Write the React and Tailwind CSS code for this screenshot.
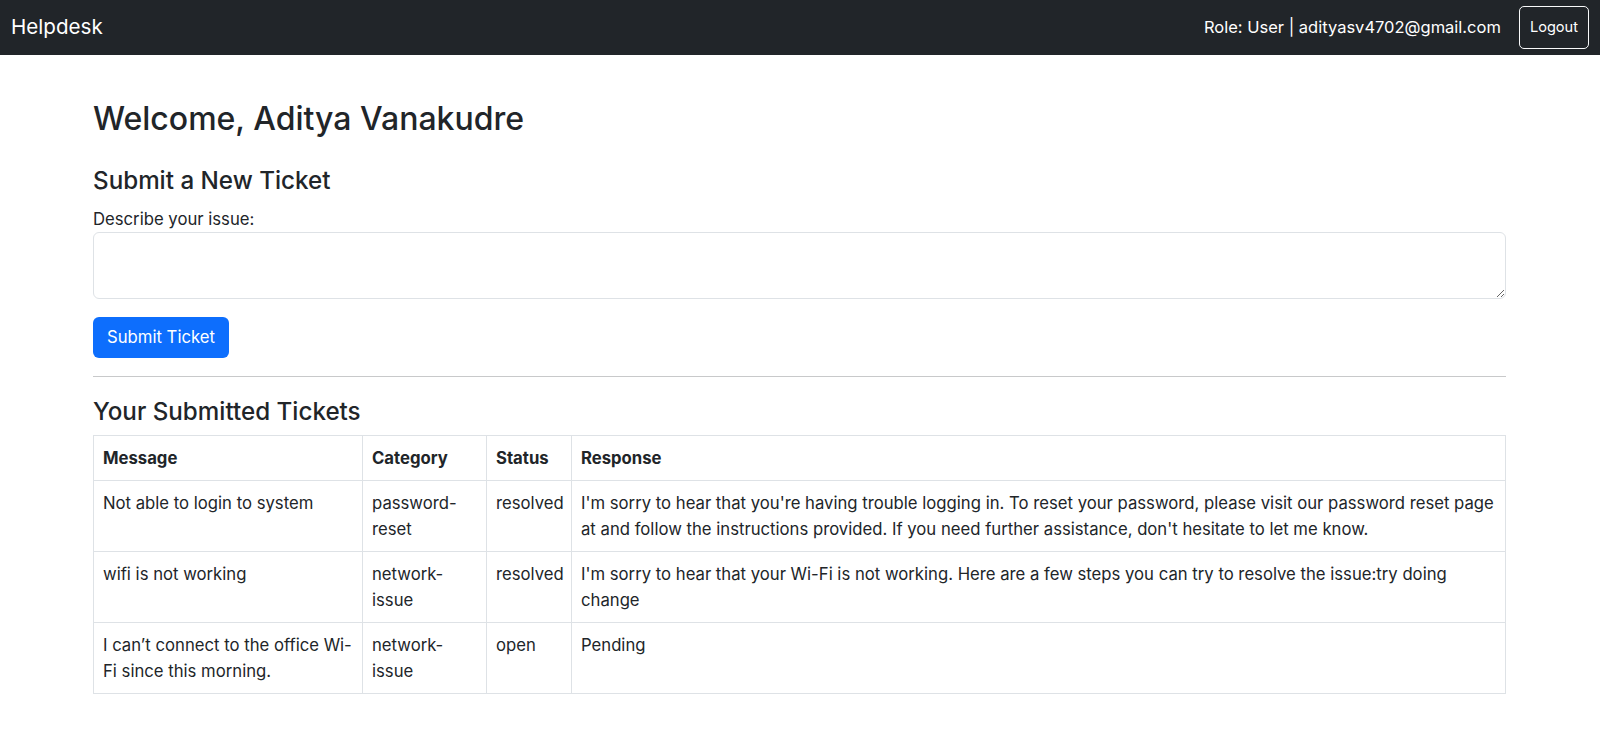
const tickets = [
  {
    message: "Not able to login to system",
    category: "password-reset",
    status: "resolved",
    response: (
      <>
        I'm sorry to hear that you're having trouble logging in. To reset your password, please visit our password reset page
        <br />
        at and follow the instructions provided. If you need further assistance, don't hesitate to let me know.
      </>
    ),
  },
  {
    message: "wifi is not working",
    category: "network-issue",
    status: "resolved",
    response: (
      <>
        I'm sorry to hear that your Wi-Fi is not working. Here are a few steps you can try to resolve the issue:try doing
        <br />
        change
      </>
    ),
  },
  {
    message: (
      <>
        I can’t connect to the office Wi-
        <br />
        Fi since this morning.
      </>
    ),
    category: "network-issue",
    status: "open",
    response: "Pending",
  },
];

export default function App() {
  return (
    <div className="min-h-screen bg-white text-[#212529] font-['Inter','Liberation_Sans',sans-serif]">
      {/* top bar */}
      <nav className="h-[55px] bg-[#212529] flex items-center justify-between pl-[11px] pr-[11px]">
        <span className="text-white text-[20.6px] leading-none">Helpdesk</span>
        <div className="flex items-center gap-[18px]">
          <span className="text-white text-[16.5px]">Role: User | adityasv4702@gmail.com</span>
          <button className="h-[43px] px-[10px] border border-[#f8f9fa] rounded-[5px] text-white text-[14.6px]">
            Logout
          </button>
        </div>
      </nav>

      <main className="w-[1413px] ml-[93px]">
        <h2 className="mt-[43px] text-[32px] font-medium leading-[42px]">Welcome, Aditya Vanakudre</h2>

        <h4 className="mt-[25px] text-[24.2px] font-medium leading-[32px]">Submit a New Ticket</h4>
        <label className="block mt-[9px] text-[16.7px] leading-[26px]">Describe your issue:</label>
        <textarea className="block w-full h-[67px] border border-[#dee2e6] rounded-[6px] px-3 py-2 outline-none" />
        <button className="mt-[18px] h-[41px] px-[14px] bg-[#0d6efd] text-white text-[16.7px] rounded-[6px]">
          Submit Ticket
        </button>

        <hr className="mt-[18px] border-0 border-t border-[#c8c9ca]" />

        <h4 className="mt-[19px] text-[24.2px] font-medium leading-[32px]">Your Submitted Tickets</h4>

        <table className="mt-[7px] w-full table-fixed border-collapse text-[16.7px] leading-[26px]">
          <colgroup>
            <col className="w-[269px]" />
            <col className="w-[124px]" />
            <col className="w-[85px]" />
            <col />
          </colgroup>
          <thead>
            <tr>
              <th className="border border-[#dee2e6] px-[9px] py-[9px] text-left font-bold">Message</th>
              <th className="border border-[#dee2e6] px-[9px] py-[9px] text-left font-bold">Category</th>
              <th className="border border-[#dee2e6] px-[9px] py-[9px] text-left font-bold">Status</th>
              <th className="border border-[#dee2e6] px-[9px] py-[9px] text-left font-bold">Response</th>
            </tr>
          </thead>
          <tbody>
            {tickets.map((t, i) => (
              <tr key={i} className="align-top">
                <td className="border border-[#dee2e6] px-[9px] py-[9px]">{t.message}</td>
                <td className="border border-[#dee2e6] px-[9px] py-[9px]">{t.category}</td>
                <td className="border border-[#dee2e6] px-[9px] py-[9px]">{t.status}</td>
                <td className="border border-[#dee2e6] px-[9px] py-[9px]">
                  {t.response}
                  {i === 2 && <br />}
                </td>
              </tr>
            ))}
          </tbody>
        </table>
      </main>
    </div>
  );
}
